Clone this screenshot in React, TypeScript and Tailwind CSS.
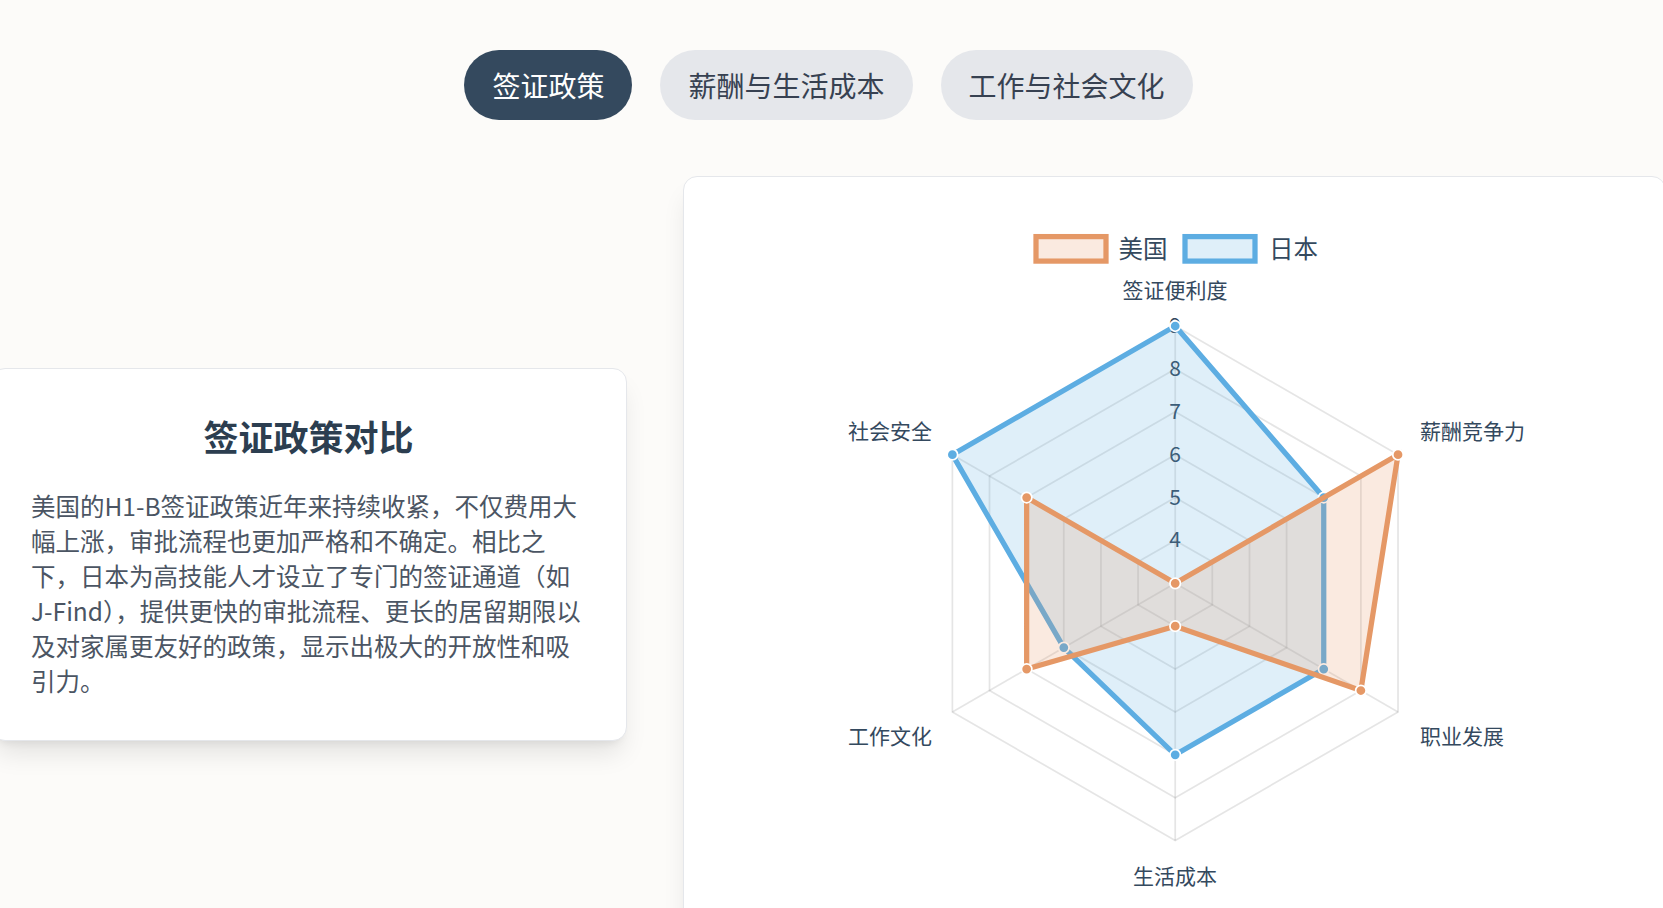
import React from "react";

const ORANGE = "#e59866";
const BLUE = "#5dade2";
const TEXT = "#34495e";

const cx = 449.2;
const cy = 364.3;
const step = 42.88;
const angles = [-90, -30, 30, 90, 150, 210].map((d) => (d * Math.PI) / 180);

const pt = (i: number, v: number) => {
  const r = (v - 3) * step;
  return [cx + r * Math.cos(angles[i]), cy + r * Math.sin(angles[i])];
};

const poly = (vals: number[]) =>
  vals.map((v, i) => pt(i, v).map((n) => n.toFixed(2)).join(",")).join(" ");

const us = [3, 9, 8, 4, 7, 7];
const jp = [9, 7, 7, 7, 6, 9];

function Radar() {
  const rings = [4, 5, 6, 7, 8, 9];
  return (
    <svg width="896" height="690" viewBox="0 0 896 690" className="block">
      {/* legend */}
      <rect x="310" y="17.6" width="70" height="24.5" fill="rgba(229,152,102,0.2)" stroke={ORANGE} strokeWidth="5.25" />
      <text x="392.5" y="28" fontSize="24.5" fill={TEXT} dominantBaseline="central">美国</text>
      <rect x="459" y="17.6" width="70" height="24.5" fill="rgba(93,173,226,0.2)" stroke={BLUE} strokeWidth="5.25" />
      <text x="543" y="28" fontSize="24.5" fill={TEXT} dominantBaseline="central">日本</text>

      {/* grid */}
      {rings.map((v) => (
        <polygon key={v} points={poly([v, v, v, v, v, v])} fill="none" stroke="rgba(0,0,0,0.1)" strokeWidth="1.75" />
      ))}
      {angles.map((_, i) => {
        const [x, y] = pt(i, 9);
        return <line key={i} x1={cx} y1={cy} x2={x} y2={y} stroke="rgba(0,0,0,0.1)" strokeWidth="1.75" />;
      })}
      {rings.map((v) => (
        <text key={v} x={cx} y={cy - (v - 3) * step - 2} fontSize="21" fill={TEXT} textAnchor="middle" dominantBaseline="central">
          {v}
        </text>
      ))}

      {/* point labels */}
      <text x="449" y="70" fontSize="21" fill={TEXT} textAnchor="middle" dominantBaseline="central">签证便利度</text>
      <text x="694" y="211" fontSize="21" fill={TEXT} textAnchor="start" dominantBaseline="central">薪酬竞争力</text>
      <text x="694" y="516" fontSize="21" fill={TEXT} textAnchor="start" dominantBaseline="central">职业发展</text>
      <text x="449" y="656" fontSize="21" fill={TEXT} textAnchor="middle" dominantBaseline="central">生活成本</text>
      <text x="206" y="516" fontSize="21" fill={TEXT} textAnchor="end" dominantBaseline="central">工作文化</text>
      <text x="206" y="211" fontSize="21" fill={TEXT} textAnchor="end" dominantBaseline="central">社会安全</text>

      {/* Japan (drawn first, below) */}
      <polygon points={poly(jp)} fill="rgba(93,173,226,0.2)" stroke={BLUE} strokeWidth="5.25" strokeLinejoin="miter" />
      {jp.map((v, i) => {
        const [x, y] = pt(i, v);
        return <circle key={i} cx={x} cy={y} r="5.25" fill={BLUE} stroke="#fff" strokeWidth="1.75" />;
      })}

      {/* USA (on top) */}
      <polygon points={poly(us)} fill="rgba(229,152,102,0.2)" stroke={ORANGE} strokeWidth="5.25" strokeLinejoin="miter" />
      {us.map((v, i) => {
        const [x, y] = pt(i, v);
        return <circle key={i} cx={x} cy={y} r="5.25" fill={ORANGE} stroke="#fff" strokeWidth="1.75" />;
      })}
    </svg>
  );
}

export default function App() {
  const tabs = ["签证政策", "薪酬与生活成本", "工作与社会文化"];
  return (
    <div className="w-[1663px] h-[908px] overflow-hidden bg-[#fcfbf9] font-['Noto_Sans_CJK_SC','Noto_Sans',sans-serif]">
      <div className="ml-[-9px] w-[1675px]">
        <div className="flex justify-center gap-[28px] pt-[50px]">
          {tabs.map((t, i) => (
            <button
              key={t}
              className={
                i === 0
                  ? "rounded-full bg-[#34495e] px-[28px] py-[14px] text-[28px] leading-[42px] text-white"
                  : "rounded-full bg-[#e5e7eb] px-[28px] py-[14px] text-[28px] leading-[42px] text-[#374151]"
              }
            >
              {t}
            </button>
          ))}
        </div>

        <div className="mt-[56px] flex items-center gap-[56px]">
          <div className="w-[636px] shrink-0 rounded-[14px] border border-[#e5e7eb] bg-white py-[42px] pl-[39px] pr-[40px] shadow-[0_17px_26px_-5px_rgba(0,0,0,0.1),0_7px_10px_-7px_rgba(0,0,0,0.1)]">
            <h2 className="mb-[28px] text-center text-[35px] leading-[49px] font-bold text-[#2c3e50]">签证政策对比</h2>
            <p className="text-[24.5px] leading-[35px] text-[#4b5563]">
              美国的H1-B签证政策近年来持续收紧，不仅费用大幅上涨，审批流程也更加严格和不确定。相比之下，日本为高技能人才设立了专门的签证通道（如J-Find），提供更快的审批流程、更长的居留期限以及对家属更友好的政策，显示出极大的开放性和吸引力。
            </p>
          </div>
          <div className="w-[983px] shrink-0 rounded-[14px] border border-[#e5e7eb] bg-white px-[42px] pt-[42px] pb-[23px] shadow-[0_17px_26px_-5px_rgba(0,0,0,0.1),0_7px_10px_-7px_rgba(0,0,0,0.1)]">
            <Radar />
          </div>
        </div>
      </div>
    </div>
  );
}
